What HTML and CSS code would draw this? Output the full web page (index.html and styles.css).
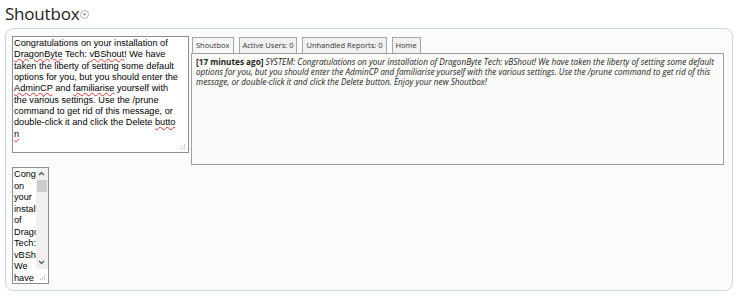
FILE: index.html
```
<!DOCTYPE html>
<html>
  <head>
    <title>Shoutbox</title>
    <meta name="viewport" content="width=device-width, initial-scale=1" />
    <link rel="stylesheet" href="styles.css">
  </head>

  <body>
    <h2 class="block-title">
      Shoutbox
      <svg class="collapse-icon" width="9" height="9" viewBox="0 0 9 9">
        <circle cx="4.5" cy="4.5" r="4" fill="none" stroke="#9a9a9a" stroke-width="0.8" />
        <path d="M2.6 3.6 L6.4 3.6 L4.5 5.8 Z" fill="#8a8a8a" />
      </svg>
    </h2>

    <div class="block-body">
      <div class="shout-row">
        <div class="shout-input">
          <div>Congratulations on your installation of</div>
          <div><span class="typo">DragonByte</span> Tech: <span class="typo">vBShout</span>! We have</div>
          <div>taken the liberty of setting some default</div>
          <div>options for you, but you should enter the</div>
          <div><span class="typo">AdminCP</span> and <span class="typo">familiarise</span> yourself with</div>
          <div>the various settings. Use the /prune</div>
          <div>command to get rid of this message, or</div>
          <div>double-click it and click the Delete <span class="typo">butto</span></div>
          <div><span class="typo">n</span></div>
          <svg class="grip" width="6" height="6" viewBox="0 0 6 6">
            <rect x="4" y="0" width="1" height="1" fill="#b5b5b5" />
            <rect x="2" y="2" width="1" height="1" fill="#b5b5b5" />
            <rect x="4" y="2" width="1" height="1" fill="#b5b5b5" />
            <rect x="0" y="4" width="1" height="1" fill="#b5b5b5" />
            <rect x="2" y="4" width="1" height="1" fill="#b5b5b5" />
            <rect x="4" y="4" width="1" height="1" fill="#b5b5b5" />
          </svg>
        </div>

        <div class="shout-frame">
          <ul class="shout-tabs">
            <li class="tab active">Shoutbox</li>
            <li class="tab">Active Users: 0</li>
            <li class="tab">Unhandled Reports: 0</li>
            <li class="tab">Home</li>
          </ul>
          <div class="shout-messages">
            <b>[17 minutes ago]</b> <i>SYSTEM: Congratulations on your installation of DragonByte Tech: vBShout! We have taken the liberty of setting some default<br />
            options for you, but you should enter the AdminCP and familiarise yourself with the various settings. Use the /prune command to get rid of this<br />
            message, or double-click it and click the Delete button. Enjoy your new Shoutbox!</i>
          </div>
        </div>
      </div>

      <div class="shout-mini">
        <div class="mini-text">
          <div>Congratulations</div>
          <div>on</div>
          <div>your</div>
          <div>installation</div>
          <div>of</div>
          <div>DragonByte</div>
          <div>Tech:</div>
          <div>vBShout!</div>
          <div>We</div>
          <div>have</div>
        </div>
        <div class="mini-scroll">
          <div class="scroll-track">
            <svg class="arrow" width="11" height="10" viewBox="0 0 11 10">
              <path d="M3 6 L5.5 3.5 L8 6" fill="none" stroke="#505050" stroke-width="1.2" />
            </svg>
            <div class="scroll-thumb"></div>
            <svg class="arrow down" width="11" height="10" viewBox="0 0 11 10">
              <path d="M3 4 L5.5 6.5 L8 4" fill="none" stroke="#505050" stroke-width="1.2" />
            </svg>
          </div>
          <svg class="grip" width="6" height="6" viewBox="0 0 6 6">
            <rect x="4" y="0" width="1" height="1" fill="#b5b5b5" />
            <rect x="2" y="2" width="1" height="1" fill="#b5b5b5" />
            <rect x="4" y="2" width="1" height="1" fill="#b5b5b5" />
            <rect x="0" y="4" width="1" height="1" fill="#b5b5b5" />
            <rect x="2" y="4" width="1" height="1" fill="#b5b5b5" />
            <rect x="4" y="4" width="1" height="1" fill="#b5b5b5" />
          </svg>
        </div>
      </div>
    </div>
  </body>
</html>
```

FILE: styles.css
```
*,
*:before,
*:after {
  box-sizing: border-box;
}

body {
  margin: 0;
  background: #fff;
  font-family: "Open Sans", sans-serif;
  color: #222;
}

.block-title {
  display: flex;
  align-items: center;
  gap: 1px;
  margin: 0;
  padding: 0 0 0 5px;
  height: 26px;
  font-size: 17px;
  font-weight: normal;
  color: #222;
  letter-spacing: -0.2px;
}

.collapse-icon {
  margin-top: 3px;
}

.block-body {
  margin: 2px 5px 0 5px;
  height: 263px;
  border: 1px solid #c8d9df;
  border-radius: 8px;
  background: #f9fbfd;
  padding: 7px 8px 8px 6px;
}

.shout-row {
  display: flex;
  gap: 2px;
}

.shout-input {
  position: relative;
  flex-shrink: 0;
  width: 177px;
  height: 117px;
  border: 1px solid #8e8e8e;
  background: #fff;
  padding: 1px 1px;
  font-family: "Liberation Sans", Arial, sans-serif;
  font-size: 9.2px;
  line-height: 11.35px;
  color: #000;
  white-space: nowrap;
  overflow: hidden;
}

.typo {
  text-decoration: underline wavy #e03030;
  text-decoration-thickness: 0.7px;
  text-underline-offset: 1px;
}

.grip {
  position: absolute;
  right: 2px;
  bottom: 2px;
}

.shout-frame {
  flex: 1;
  min-width: 0;
  margin-top: 1px;
  display: flex;
  flex-direction: column;
}

.shout-tabs {
  display: flex;
  gap: 5px;
  margin: 0;
  padding: 0 0 0 1px;
  list-style: none;
}

.tab {
  height: 16px;
  padding: 0 3px;
  border: 1px solid #a6a6a6;
  border-bottom: 0;
  background: #f1f1f1;
  font-size: 7.5px;
  line-height: 15px;
  color: #333;
}

.tab.active {
  background: #f7f7f7;
}

.shout-messages {
  height: 112px;
  border: 1px solid #9a9fa3;
  background: #fafaf8;
  padding: 3px 4px;
  font-size: 8.2px;
  line-height: 10px;
  color: #222;
  white-space: nowrap;
  overflow: hidden;
}

.shout-messages b {
  font-weight: bold;
}

.shout-mini {
  position: relative;
  display: flex;
  width: 37px;
  height: 117px;
  margin: 2px 0 0 0;
  border: 1px solid #8e8e8e;
  background: #fff;
}

.mini-text {
  width: 23px;
  padding: 1px 0 0 1px;
  font-family: "Liberation Sans", Arial, sans-serif;
  font-size: 9.2px;
  line-height: 11.5px;
  color: #000;
  white-space: nowrap;
  overflow: hidden;
}

.mini-scroll {
  width: 12px;
  display: flex;
  flex-direction: column;
}

.scroll-track {
  height: 101px;
  background: #f0f0f0;
  display: flex;
  flex-direction: column;
}

.arrow {
  display: block;
  margin: 1px 0 0 0;
}

.scroll-thumb {
  height: 12px;
  width: 10px;
  margin: 1px 0 0 1px;
  background: #cdcdcd;
}

.arrow.down {
  margin-top: auto;
  margin-bottom: 2px;
}
```
